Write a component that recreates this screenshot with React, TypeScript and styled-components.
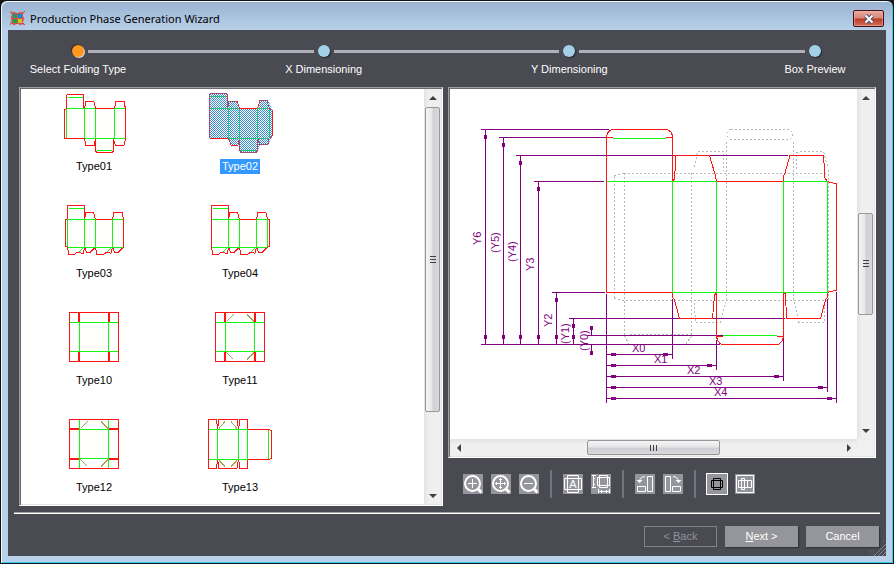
import React, { useState } from "react";
import styled, { createGlobalStyle, css } from "styled-components";

const GlobalStyle = createGlobalStyle`
  * { box-sizing: border-box; }
  body { margin: 0; background: #14161a; }
  body, button { font-family: "Liberation Sans", Arial, sans-serif; font-size: 11px; line-height: 15px; }
  button { margin: 0; padding: 0; border: 0; color: inherit; background: none; }
  ul, ol { margin: 0; padding: 0; list-style: none; }
  svg { display: block; }
`;

const Window = styled.main`
  display: flex;
  flex-direction: column;
  min-height: 100vh;
  padding: 0 6px 7px;
  border: 1px solid #10141a;
  border-radius: 7px 7px 0 0;
  background: linear-gradient(#98b2d0, #b9d1ea 30px);
  box-shadow: inset 1px 1px 0 #f0f6fc, inset -1px -1px 0 #2fd0ee;
`;

const TitleBar = styled.header`
  display: flex;
  align-items: center;
  gap: 5px;
  height: 29px;
  padding: 6px 3px 0;
`;

const Title = styled.h1`
  flex: 1;
  margin: 0;
  font: 11px/16px "Noto Sans", "Open Sans", sans-serif;
  color: #000;
`;

const CloseButton = styled.button`
  display: grid;
  place-items: center;
  width: 31px;
  height: 17px;
  border: 1px solid #43101c;
  border-radius: 2px;
  background: linear-gradient(#e9aa9f 0, #d98677 48%, #bb3a22 52%, #d4705a 100%);
  box-shadow: inset 0 0 0 1px #f0b9ae80;
`;

const Body = styled.div`
  position: relative;
  flex: 1;
  display: flex;
  flex-direction: column;
  margin: 0 1px;
  background: #4a4a52;
  color: #fff;
`;

const Steps = styled.div`
  padding-top: 15px;
`;

const Track = styled.div`
  display: flex;
  align-items: center;
  gap: 4px;
  padding: 0 65px 0 64px;
`;

const Dot = styled.span<{ $active?: boolean }>`
  width: 12px;
  height: 12px;
  border-radius: 50%;
  background: ${(p) => (p.$active ? "#ff981c" : "#a2d0e6")};
  box-shadow: ${(p) => (p.$active ? "1px 1px 0 #d8d4d0, -1px -1px 1px #3a2c24" : "1px 1px 1px #26262c")};
`;

const Connector = styled.span`
  flex: 1;
  height: 3px;
  background: #b0b0ba;
`;

const StepLabels = styled.ol`
  display: flex;
  justify-content: space-between;
  padding: 5px 21px 0 20px;
`;

const StepLabel = styled.li`
  width: 100px;
  text-align: center;
`;

const Panels = styled.div`
  flex: 1;
  display: grid;
  grid-template-columns: minmax(0, 424fr) minmax(0, 428fr);
  gap: 5px;
  padding: 10px 10px 0 11px;
`;

const Sunken = styled.section`
  display: flex;
  min-height: 0;
  border: 1px solid;
  border-color: #a0a0a0 #fff #fff #a0a0a0;
  background: #fff;
  box-shadow: inset 1px 1px 0 #696969, inset -1px -1px 0 #e3e3e3;
  padding: 1px;
`;

const TypeGrid = styled.ul`
  flex: 1;
  display: grid;
  grid-template-columns: repeat(auto-fill, 146px);
  align-content: start;
  row-gap: 22px;
`;

const TypeButton = styled.button`
  display: flex;
  flex-direction: column;
  align-items: center;
  gap: 3px;
  width: 100%;
  padding-top: 3px;
`;

const TypeName = styled.span<{ $selected: boolean }>`
  padding: 0 2px;
  color: ${(p) => (p.$selected ? "#fff" : "#000")};
  background: ${(p) => (p.$selected ? "#3399ff" : "transparent")};
`;

const Column = styled.div`
  display: flex;
  flex-direction: column;
  min-height: 0;
`;

const Viewer = styled(Sunken)`
  flex: 1;
  display: grid;
  grid-template-columns: minmax(0, 1fr) 17px;
  grid-template-rows: minmax(0, 1fr) 17px;
`;

const Drawing = styled.svg`
  width: 100%;
  height: 100%;
  min-height: 0;
`;

const Corner = styled.div`
  background: #f0f0f0;
`;

const Bar = styled.div<{ $horizontal?: boolean }>`
  display: flex;
  flex: none;
  background: linear-gradient(${(p) => (p.$horizontal ? "180deg" : "90deg")}, #e3e3e3, #efefef 30%, #f0f0f0);
  ${(p) => (p.$horizontal ? css`height: 17px;` : css`width: 17px; flex-direction: column;`)}
`;

const ArrowButton = styled.button`
  flex: none;
  display: grid;
  place-items: center;
  width: 17px;
  height: 17px;
`;

const Rail = styled.div<{ $horizontal?: boolean; $before: number; $size: number; $after: number }>`
  flex: 1;
  display: grid;
  ${(p) => {
    const t = `${p.$before}fr ${p.$size}fr ${p.$after}fr`;
    return p.$horizontal ? `grid-template-columns: ${t};` : `grid-template-rows: ${t};`;
  }}
`;

const Thumb = styled.div<{ $horizontal?: boolean }>`
  display: grid;
  place-items: center;
  border: 1px solid #979797;
  border-radius: 2px;
  background: linear-gradient(${(p) => (p.$horizontal ? "180deg" : "90deg")}, #f5f5f5, #e6e6ea 45%, #cfcfd5 55%, #d9d9dc);
  ${(p) => (p.$horizontal ? css`grid-column: 2; margin: 1px 0;` : css`grid-row: 2; margin: 0 1px;`)}
`;

const Toolbar = styled.div`
  display: flex;
  align-items: center;
  gap: 8px;
  padding: 12px 15px 8px;
`;

const ToolButton = styled.button<{ $pressed?: boolean }>`
  width: 20px;
  height: 20px;
  background: #95959c;
  color: ${(p) => (p.$pressed ? "#000" : "#fff")};
  outline: ${(p) => (p.$pressed ? "1px solid #fff" : "none")};
`;

const Divider = styled.span`
  width: 2px;
  height: 28px;
  margin: 0 3px;
  background: #74747f;
`;

const Footer = styled.footer`
  display: flex;
  justify-content: flex-end;
  gap: 8px;
  margin: 6px 6px 0;
  padding: 13px 1px 9px;
  border-top: 1px solid #a0a0a0;
  box-shadow: inset 0 1px 0 #fff;
`;

const WizardButton = styled.button`
  width: 73px;
  height: 21px;
  background: #95959c;
  color: #fff;
  box-shadow: 1px 1px 1px #33333a;
  &:disabled {
    background: none;
    border: 1px solid #82828a;
    color: #92929a;
    box-shadow: none;
  }
`;

const Grip = styled.svg`
  position: absolute;
  right: 0;
  bottom: 0;
`;

const RED = "#ff1414";
const GREEN = "#14f514";
const OLIVE = "#a8a050";

type Art = { fill: string; red: string; green: string; olive?: string };

const art: Record<string, Art> = {
  Type01: {
    fill: "M4.5 17H66V47H55V53H54V61H36V47H4.5Z",
    red: "M6.5 17V4Q6.5 2.5 8 2.5H22Q23.5 2.5 23.5 4V17M6.5 17L4.5 18V46L6.5 46.5H24.5L26 53.5H34L35.5 47V59L37 60.5H52L53.5 59V47L55.5 53.5H64L65.5 46.5V17L64 9.5H56L54.5 16.5H35.5L34 9.5H26L24.5 16.5",
    green: "M8 5.5H23M6.5 16.5H35M54 16.5H65M24.5 46.5H65M6.5 17V46M24.5 17V46M35.5 17V46M54.5 17V46M37 58.5H52",
  },
  Type02: {
    fill: "M3 17V3L5 1H21L22 9H31L34 17H52L54 8H62L66 17V45L62 53H54L52 59L50 61H34L33 53H25L22 46H3Z",
    red: "M3.5 46V3L5 1.5H20L21.5 3V17L23 9H31L33.5 16.5H51.5L54 8.5H61L63.5 17L66 18V44L63 46L62 52.5H54L51.5 46V58L50 60.5H35L33.5 58V46L32 53H25L22.5 46H3.5",
    green: "M5 4.5H20M3.5 16.5H33M51 16.5H63M22.5 46.5H63M22.5 17V46M33.5 17V46M51.5 17V46M63.5 17V46M35 58.5H50",
  },
  Type03: {
    fill: "M6 20H63V48H6Z",
    red: "M7.5 20V7.5Q7.5 6.5 9 6.5H23Q24.5 6.5 24.5 8V20L26 13.5H33.5L35.5 20.5H52.5L54 13.5H62L63.5 20V48L58 53.5H54.5L52.5 48L51 54.5L47 53L43.5 55.5H37L35.5 48L30 53.5H26.5L24.5 48L23.5 54.5L17 53L14.5 55.5H9L7.5 48L5.5 47V21L7.5 20.5",
    green: "M9 9.5H24M7.5 20.5H35M52.5 20.5H63M7.5 48.5H63M7.5 20V48M24.5 20V48M35.5 20V48M52.5 20V48M19 53L24 48M47 53L52 48",
  },
  Type04: {
    fill: "M6 20H63V48H6Z",
    red: "M5.5 48V7.5Q5.5 6.5 7 6.5H21Q22.5 6.5 22.5 8V20L24 13.5H31.5L33.5 20.5H50.5L52 13.5H60L61.5 20.5L63.5 21V47L61.5 48L56 53.5H52.5L50.5 48L49 54.5L45 53L41.5 55.5H35L33.5 48L28 53.5H24.5L22.5 48L21.5 54.5L15 53L12.5 55.5H7L5.5 48",
    green: "M7 9.5H22M5.5 20.5H33M50.5 20.5H61M5.5 48.5H61M22.5 20V48M33.5 20V48M50.5 20V48M61.5 20V48M17 53L22 48M45 53L50 48",
  },
  Type10: {
    fill: "M20 17H49V45H20Z",
    red: "M9.5 6.5H58.5V55.5H9.5ZM18.5 7V16M19.5 7V16M48.5 7V16M49.5 7V16M18.5 46V55M19.5 46V55M48.5 46V55M49.5 46V55",
    green: "M10 16.5H58M10 45.5H58M19.5 17V45M48.5 17V45",
  },
  Type11: {
    fill: "M20 17H49V45H20Z",
    red: "M9.5 6.5H58.5V55.5H9.5ZM18.5 7V16M19.5 7V16M48.5 7V16M49.5 7V16M18.5 46V55M19.5 46V55M48.5 46V55M49.5 46V55",
    green: "M10 16.5H58M10 45.5H58M19.5 17V45M48.5 17V45",
    olive: "M20.5 15.5L27.5 8.5M41 8.5L48 15.5M20.5 46.5L27.5 53.5M41 53.5L48 46.5",
  },
  Type12: {
    fill: "M20 17H49V45H20Z",
    red: "M9.5 6.5H58.5V55.5H9.5ZM10 15.5H19M10 16.5H19M49 15.5H58M49 16.5H58M10 45.5H19M10 46.5H19M49 45.5H58M49 46.5H58",
    green: "M19.5 7V55M48.5 7V55M20 16.5H48M20 45.5H48",
    olive: "M20.5 15.5L27.5 8.5M41 8.5L48 15.5M20.5 46.5L27.5 53.5M41 53.5L48 46.5",
  },
  Type13: {
    fill: "M12 17H32V45H12Z",
    red: "M2.5 6.5H10.5L11.5 16L13 6.5H31L32.5 16L34 6.5H41.5V16.5H63L65.5 18V45L63 46.5H41.5V55.5H34L32.5 46L31 55.5H13L11.5 46L10.5 55.5H2.5Z",
    green: "M3 16.5H42M3 46.5H42M11.5 17V46M32.5 17V46M41.5 17V46M62.5 17V46",
    olive: "M13 15.5L19 8.5M25 8.5L31 15.5M13 47.5L19 53.5M25 53.5L31 47.5",
  },
};

// One-pixel checkerboard laid over the selected thumbnail.
const checker = Array.from({ length: 64 }, (_, y) =>
  Array.from({ length: 34 }, (_, i) => `M${i * 2 + (y % 2)} ${y}h1v1h-1z`).join("")
).join("");

function BoxThumb({ name, selected }: { name: string; selected: boolean }) {
  const a = art[name];
  return (
    <svg width="68" height="64" viewBox="0 0 68 64" fill="none" shapeRendering="crispEdges" aria-hidden="true">
      <path d={a.fill} fill="#fffffb" />
      <path d={a.red} stroke={RED} />
      <path d={a.green} stroke={GREEN} />
      {a.olive && <path d={a.olive} stroke={OLIVE} />}
      {selected && (
        <>
          <clipPath id="picked"><path d={a.fill} /></clipPath>
          <path d={checker} fill="#3a8cd8" clipPath="url(#picked)" />
        </>
      )}
    </svg>
  );
}

const arrows = {
  up: "M0 6L4 2L8 6Z",
  down: "M0 2L4 6L8 2Z",
  left: "M6 0L2 4L6 8Z",
  right: "M2 0L6 4L2 8Z",
};

function Arrow({ dir }: { dir: keyof typeof arrows }) {
  return (
    <ArrowButton aria-label={`Scroll ${dir}`}>
      <svg width="8" height="8" viewBox="0 0 8 8"><path d={arrows[dir]} fill="#404040" /></svg>
    </ArrowButton>
  );
}

function ScrollBar({ horizontal, before, size, after }: { horizontal?: boolean; before: number; size: number; after: number }) {
  return (
    <Bar $horizontal={horizontal}>
      <Arrow dir={horizontal ? "left" : "up"} />
      <Rail $horizontal={horizontal} $before={before} $size={size} $after={after}>
        <Thumb $horizontal={horizontal}>
          <svg width="8" height="8" viewBox="0 0 8 8">
            <path
              d={horizontal ? "M.5 1V7M3.5 1V7M6.5 1V7" : "M1 .5H7M1 3.5H7M1 6.5H7"}
              stroke="#404040"
            />
          </svg>
        </Thumb>
      </Rail>
      <Arrow dir={horizontal ? "right" : "down"} />
    </Bar>
  );
}

const verticalDims = [
  { label: "Y6", x: 485.5, top: 129.5, to: 609, text: 245 },
  { label: "(Y5)", x: 503.5, top: 137.5, to: 606, text: 253 },
  { label: "(Y4)", x: 520.5, top: 155.5, to: 788, text: 262 },
  { label: "Y3", x: 538.5, top: 181.5, to: 604, text: 271 },
  { label: "Y2", x: 556.5, top: 292.5, to: 605, text: 327 },
  { label: "(Y1)", x: 573.5, top: 318.5, to: 785, text: 344 },
];

const horizontalDims = [
  { label: "X0", y: 354.5, right: 672.5, from: 299, text: 632 },
  { label: "X1", y: 365.5, right: 716.5, from: 340, text: 654 },
  { label: "X2", y: 376.5, right: 783.5, from: 338, text: 687 },
  { label: "X3", y: 387.5, right: 827.5, from: 299, text: 709 },
  { label: "X4", y: 398.5, right: 836.5, from: 292, text: 714 },
];

function BoxDrawing() {
  return (
    <Drawing
      viewBox="450 89 407 350"
      fill="none"
      shapeRendering="crispEdges"
      role="img"
      aria-label="Folding box with dimensions"
    >
      <path
        stroke="#b8b8b8"
        strokeDasharray="2 2"
        d="M624 173.5H828M614.5 176V298M614.5 176L624 173.5M624.5 173V336M614.5 298L624 300.5H828M691.5 173V336M726.5 142V300M793.5 142V300M828.5 170V300M731 129.5H789Q792.5 131 792.5 135Q792 139 788 139.5H731Q727.5 138 727.5 134Q728 130 731 129.5M694.5 167L697.5 151.5H723.5V171M796.5 169V153L799 151.5H823.5L828 168M694.5 303L695.5 322.5H720L723 313L726 302M794 302L799 322.5H824.5V303M630 334.5H691M624.5 336L629 344M691.5 336L686 344"
      />
      <g stroke="#800080">
        {verticalDims.map((d) => (
          <path key={d.label} d={`M${d.x - 4.5} ${d.top}H${d.to}M${d.x} ${d.top}V344.5`} />
        ))}
        <path d="M481 344.5H720M587 335.5H723M591.5 328V335M591.5 345V353M606.5 294V403" />
        {horizontalDims.map((d) => (
          <path key={d.label} d={`M606.5 ${d.y}H${d.right}M${d.right} ${d.from}V${d.y + 4}`} />
        ))}
      </g>
      <g fill="#800080" fontFamily="Liberation Sans, Arial, sans-serif" fontSize="11">
        {verticalDims.map((d) => (
          <g key={d.label}>
            <rect x={d.x - 1.5} y={d.top + 5.5} width="3" height="4" />
            <rect x={d.x - 1.5} y="335" width="3" height="4" />
            <text transform={`translate(${d.x - 4.5} ${d.text}) rotate(-90)`}>{d.label}</text>
          </g>
        ))}
        <rect x="590" y="326" width="3" height="4" />
        <rect x="590" y="351" width="3" height="4" />
        <text transform="translate(588 351) rotate(-90)">(Y0)</text>
        {horizontalDims.map((d) => (
          <g key={d.label}>
            <rect x="611" y={d.y - 1.5} width="5" height="3" />
            <rect x={d.right - 9.5} y={d.y - 1.5} width="5" height="3" />
            <text x={d.text} y={d.y - 2.5}>{d.label}</text>
          </g>
        ))}
      </g>
      <g stroke={RED}>
        <path d="M606.5 292.5V137.5Q607 131 612 129.5H667Q672 131 672.5 137V181.5L674.5 179L676 155.5H709.5L715.5 176L716.5 181.5H783.5V176L785 173L790 155.5H823.5L825 178L827.5 181.5L836.5 184V290L827.5 292.5V297L825.5 300L820.5 318.5H786.5L785.5 294L783.5 292.5V337Q782 343 778 344.5H722Q718 343 716.5 337V292.5L714.5 295L712.5 318.5H679.5L674.5 300L672.5 297V292.5H606.5" />
        <path d="M606.5 137.5H613M666 137.5H672M716.5 336.5H723M777 336.5H783" />
      </g>
      <path
        stroke={GREEN}
        d="M613 138.5H666M606.5 181.5H716.5M783.5 181.5H827.5M672.5 292.5H827.5M672.5 181V292.5M716.5 181V292.5M783.5 181V292.5M827.5 181V292.5M723 335.5H777"
      />
    </Drawing>
  );
}

const lens = (
  <>
    <circle cx="9.5" cy="9.5" r="7.5" strokeWidth="2" />
    <path d="M15 15L18.5 18.5" strokeWidth="3" />
  </>
);

const tools: Record<string, React.ReactNode> = {
  "Zoom in": <>{lens}<path d="M5 9.5H14M9.5 5V14" /></>,
  "Zoom to fit": <>{lens}<path d="M4 9.5H15M9.5 4V15M8 5.5H11M8 13.5H11M5.5 8V11M13.5 8V11" /></>,
  "Zoom out": <>{lens}<path d="M5 9.5H14" /></>,
  "Show labels": (
    <>
      <path d="M1.5 4.5H18.5V15.5H1.5ZM4.5 1.5H15.5V18.5H4.5Z" />
      <text x="10" y="14" textAnchor="middle" fontSize="11" fill="currentColor" stroke="none">A</text>
    </>
  ),
  "Show dimensions": <path d="M6.5 3.5H18.5V11.5H6.5ZM8.5 1.5H16.5V13.5H8.5ZM1 1.5H5M1 13.5H5M2.5 1V14M2 4.5H4M2 10.5H4M7.5 15V19M18.5 15V19M7 17.5H18M10.5 16V19M15.5 16V19" />,
  "Rotate left": <><path d="M12.5 2.5H17.5V17.5H12.5ZM2.5 12.5H10.5V17.5H2.5ZM10 2.5Q4.5 3 4.5 8" /><path d="M1.5 6H7.5L4.5 9Z" fill="currentColor" stroke="none" /></>,
  "Rotate right": <><path d="M2.5 2.5H7.5V17.5H2.5ZM9.5 12.5H17.5V17.5H9.5ZM10 2.5Q15.5 3 15.5 8" /><path d="M12.5 6H18.5L15.5 9Z" fill="currentColor" stroke="none" /></>,
  "Single box": <path d="M4.5 6.5H15.5V13.5H4.5ZM6.5 4.5H13.5V15.5H6.5Z" />,
  "Nested boxes": <path d="M1.5 1.5H18.5V18.5H1.5ZM3.5 6.5H16.5V13.5H3.5ZM6.5 4.5H9.5V15.5H6.5ZM12.5 7V13" />,
};

function Tool({ name, pressed }: { name: string; pressed?: boolean }) {
  return (
    <ToolButton aria-label={name} $pressed={pressed} aria-pressed={pressed}>
      <svg width="20" height="20" viewBox="0 0 20 20" fill="none" stroke="currentColor">{tools[name]}</svg>
    </ToolButton>
  );
}

const stepNames = ["Select Folding Type", "X Dimensioning", "Y Dimensioning", "Box Preview"];

export default function App() {
  const [selected, setSelected] = useState("Type02");
  return (
    <>
      <GlobalStyle />
      <Window>
        <TitleBar>
          <svg width="15" height="15" viewBox="0 0 15 15" aria-hidden="true">
            <path d="M2 2H13V13H2Z" fill="#d9534a" />
            <path d="M0 1L2 3L4 1L7 3L11 1L13 2L15 0M0 14L2 12L4 14L7 12L11 14L13 12L15 14M1 0L3 3L1 6L2 9L0 13M14 1L12 4L14 8L12 11L14 14" stroke="#c9504c" fill="none" />
            <path d="M3 3H7V7H3Z" fill="#1c9a72" />
            <path d="M8 3H12V7H8Z" fill="#1688d0" />
            <path d="M3 8H7V12H3Z" fill="#18a540" />
            <path d="M8 8H12V12H8Z" fill="#d9c020" />
          </svg>
          <Title>Production Phase Generation Wizard</Title>
          <CloseButton aria-label="Close">
            <svg width="12" height="10" viewBox="0 0 12 10">
              <path d="M2.5 1.5L9.5 8.5M9.5 1.5L2.5 8.5" stroke="#4b5266" strokeWidth="4" />
              <path d="M2.5 1.5L9.5 8.5M9.5 1.5L2.5 8.5" stroke="#fff" strokeWidth="2" />
            </svg>
          </CloseButton>
        </TitleBar>
        <Body>
          <Steps>
            <Track>
              {stepNames.map((s, i) => (
                <React.Fragment key={s}>
                  {i > 0 && <Connector />}
                  <Dot $active={i === 0} />
                </React.Fragment>
              ))}
            </Track>
            <StepLabels>
              {stepNames.map((s) => <StepLabel key={s}>{s}</StepLabel>)}
            </StepLabels>
          </Steps>
          <Panels>
            <Sunken>
              <TypeGrid>
                {Object.keys(art).map((name) => (
                  <li key={name}>
                    <TypeButton aria-pressed={name === selected} onClick={() => setSelected(name)}>
                      <BoxThumb name={name} selected={name === selected} />
                      <TypeName $selected={name === selected}>{name}</TypeName>
                    </TypeButton>
                  </li>
                ))}
              </TypeGrid>
              <ScrollBar before={1} size={305} after={75} />
            </Sunken>
            <Column>
              <Viewer>
                <BoxDrawing />
                <ScrollBar before={107} size={102} after={107} />
                <ScrollBar horizontal before={120} size={133} after={120} />
                <Corner />
              </Viewer>
              <Toolbar role="toolbar" aria-label="Preview tools">
                <Tool name="Zoom in" />
                <Tool name="Zoom to fit" />
                <Tool name="Zoom out" />
                <Divider />
                <Tool name="Show labels" />
                <Tool name="Show dimensions" />
                <Divider />
                <Tool name="Rotate left" />
                <Tool name="Rotate right" />
                <Divider />
                <Tool name="Single box" pressed />
                <Tool name="Nested boxes" />
              </Toolbar>
            </Column>
          </Panels>
          <Footer>
            <WizardButton disabled>&lt; <u>B</u>ack</WizardButton>
            <WizardButton><u>N</u>ext &gt;</WizardButton>
            <WizardButton>Cancel</WizardButton>
          </Footer>
          <Grip width="16" height="16" viewBox="0 0 16 16" aria-hidden="true">
            <path d="M4 16L16 4M8 16L16 8M12 16L16 12" stroke="#85858c" />
            <path d="M0 11H1M3 11H4M0 14H1M3 14H4M13 1H14" stroke="#77777f" />
          </Grip>
        </Body>
      </Window>
    </>
  );
}
